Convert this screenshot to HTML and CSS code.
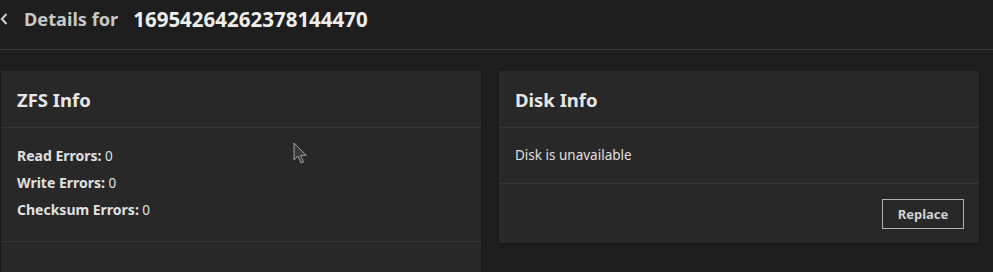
FILE: index.html
```html
<!DOCTYPE html>
<html lang="en">
<head>
    <meta charset="UTF-8">
    <title>Details for 16954264262378144470</title>
    <link rel="stylesheet" href="styles.css">
</head>
<body>
    <div class="page-header">
        <span class="back">
            <svg width="8" height="12" viewBox="0 0 8 12"><path d="M6.5 1 L1.8 6 L6.5 11" fill="none" stroke="#d0d0d0" stroke-width="2"/></svg>
        </span>
        <span class="title-muted">Details for</span>
        <span class="title-id">16954264262378144470</span>
    </div>

    <div class="cards">
        <div class="card">
            <div class="card-header">ZFS Info</div>
            <div class="card-content">
                <div class="info-line"><b>Read Errors:</b> 0</div>
                <div class="info-line"><b>Write Errors:</b> 0</div>
                <div class="info-line"><b>Checksum Errors:</b> 0</div>
            </div>
            <div class="card-footer empty"></div>
        </div>

        <div class="card short">
            <div class="card-header">Disk Info</div>
            <div class="card-content">
                <div class="info-line">Disk is unavailable</div>
            </div>
            <div class="card-footer">
                <button class="btn-outline">Replace</button>
            </div>
        </div>
    </div>

    <svg class="cursor" width="16" height="24" viewBox="0 0 16 24"><path d="M1 1 L1 18 L5 14 L8 21 L10.5 20 L7.6 13.3 L13.2 13.3 Z" fill="#3a3a3a" stroke="#a0a0a0" stroke-width="1"/></svg>
</body>
</html>
```

FILE: styles.css
```css
* {
    box-sizing: border-box;
}
body {
    margin: 0;
    background-color: #1e1e1e;
    color: #e0e0e0;
    font-family: "Noto Sans", Arial, sans-serif;
    height: 272px;
    overflow: hidden;
    position: relative;
}
.page-header {
    display: flex;
    align-items: center;
    height: 50px;
    padding-bottom: 12px;
    border-bottom: 1px solid #383838;
    font-weight: bold;
}
.back {
    display: flex;
    width: 24px;
}
.title-muted {
    color: #c8c8c8;
    font-size: 18.2px;
    margin-right: 15px;
}
.title-id {
    color: #eeeeee;
    font-size: 20.5px;
}
.cards {
    display: flex;
    align-items: flex-start;
    gap: 18px;
    padding: 21px 14px 0 1px;
}
.card {
    flex: 1;
    background-color: #282828;
    box-shadow: 0 1px 3px rgba(0, 0, 0, 0.4);
}
.card-header {
    height: 57px;
    padding: 0 16px;
    display: flex;
    align-items: center;
    font-size: 18.5px;
    font-weight: bold;
    color: #e6e6e6;
    border-bottom: 1px solid #363636;
}
.card-content {
    padding: 14px 16px;
    font-size: 13.5px;
    color: #e0e0e0;
}
.info-line {
    height: 27px;
    line-height: 27px;
}
.info-line b {
    font-size: 14px;
}
.short .card-content {
    height: 56px;
    border-bottom: 1px solid #363636;
}
.short .card-content .info-line {
    line-height: 26px;
}
.card:first-child .card-content {
    height: 114px;
    border-bottom: 1px solid #363636;
}
.card-footer {
    display: flex;
    justify-content: flex-end;
    padding: 15px 15px 14px;
}
.card-footer.empty {
    height: 40px;
}
.btn-outline {
    width: 82px;
    height: 30px;
    background: transparent;
    border: 1px solid #b0b0b0;
    color: #d0d0d0;
    font-family: "Noto Sans", Arial, sans-serif;
    font-size: 13px;
    font-weight: bold;
    cursor: pointer;
}
.cursor {
    position: absolute;
    left: 293px;
    top: 142px;
}
```
